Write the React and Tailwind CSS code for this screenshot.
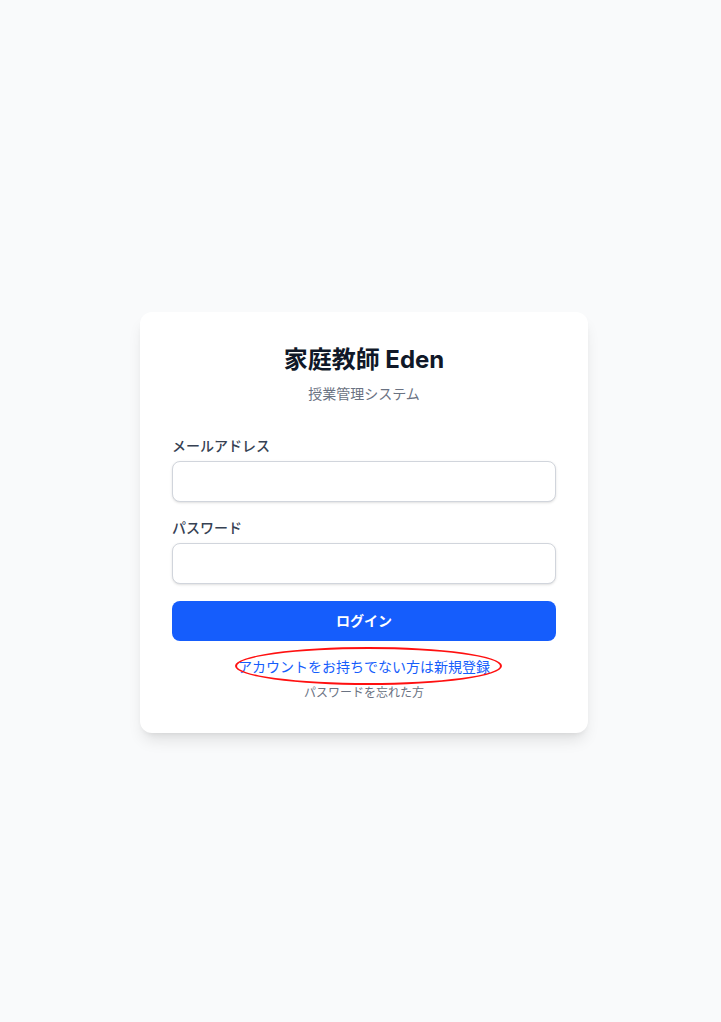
import React from "react";

const font = { fontFamily: '"Inter", "Noto Sans CJK JP", sans-serif' };

function Field({ label, type = "text" }) {
  return (
    <div>
      <label className="block text-sm font-medium text-gray-700 mb-[5px]">{label}</label>
      <input
        type={type}
        className="block w-full h-[41px] px-3 rounded-lg border border-gray-300 bg-white shadow-sm outline-none"
      />
    </div>
  );
}

export default function App() {
  return (
    <div className="min-h-screen bg-gray-50 flex items-center justify-center pt-[23px] pl-[7px]" style={font}>
      <div className="relative w-[448px] bg-white rounded-xl shadow-lg p-8">
        <h1 className="text-2xl font-bold text-gray-900 text-center">家庭教師 Eden</h1>
        <p className="mt-2 text-sm text-gray-500 text-center">授業管理システム</p>

        <form className="mt-8 space-y-4" onSubmit={(e) => e.preventDefault()}>
          <Field label="メールアドレス" type="email" />
          <Field label="パスワード" type="password" />
          <div className="pt-px">
            <button
              type="submit"
              className="block w-full h-10 rounded-lg bg-blue-600 text-white text-sm font-bold"
            >
              ログイン
            </button>
          </div>
        </form>

        <a href="#" className="block mt-4 text-sm text-blue-600 text-center">
          アカウントをお持ちでない方は新規登録
        </a>
        <a href="#" className="block mt-2 text-xs text-gray-500 text-center">
          パスワードを忘れた方
        </a>

        {/* annotation */}
        <span className="absolute left-[95px] top-[335px] w-[267px] h-[38px] rounded-[50%] border-2 border-[#ff1010] pointer-events-none" />
      </div>
    </div>
  );
}
